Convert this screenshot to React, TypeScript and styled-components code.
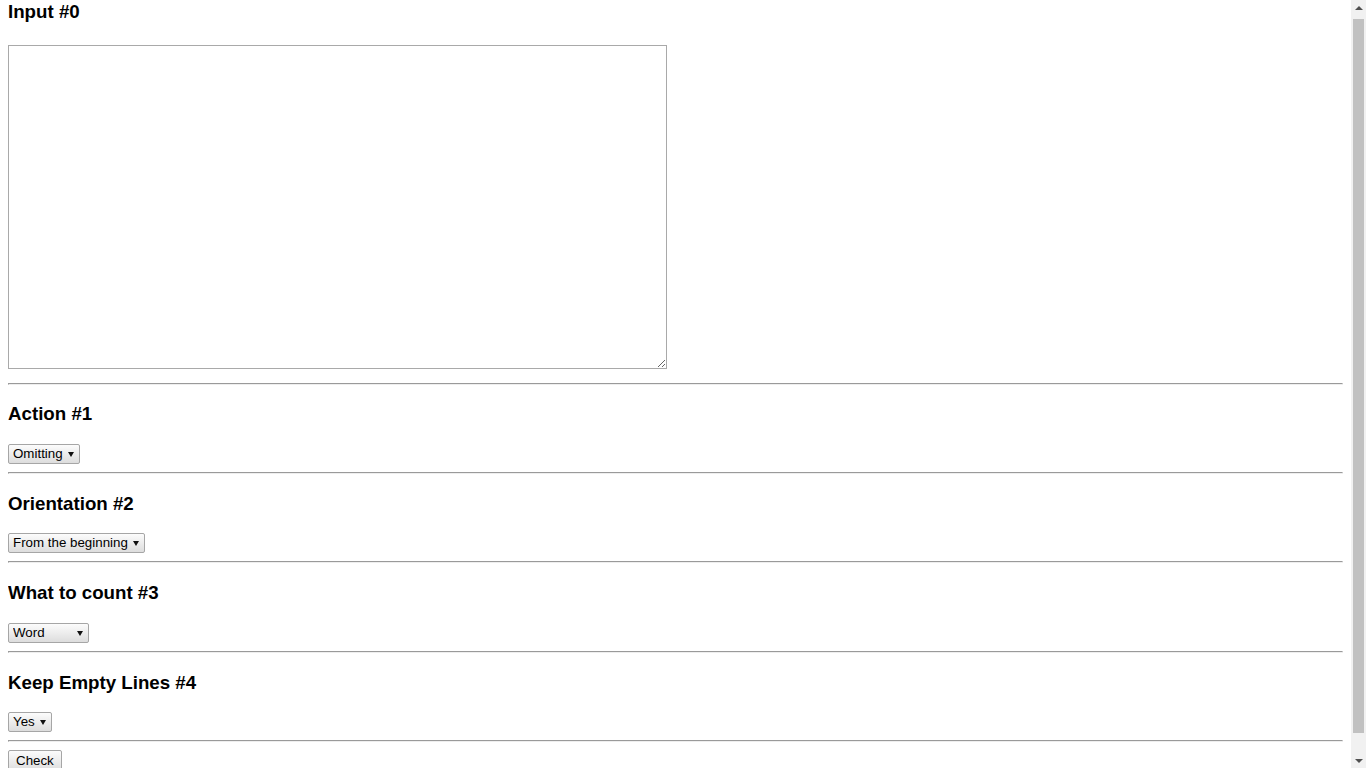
import styled, { createGlobalStyle } from 'styled-components';
import { useState } from 'react';

const GlobalStyle = createGlobalStyle`
  html {
    background: #ffffff;
  }

  body {
    margin: 0 23px 8px 8px;
    font-family: "Liberation Sans", Arial, sans-serif;
    font-size: 16px;
    color: #000000;
  }
`;

const Heading = styled.h3<{ $first?: boolean }>`
  font-size: 1.17em;
  font-weight: bold;
  margin: ${p => (p.$first ? '1px' : '1em')} 0 1em 0;
`;

const Field = styled.div`
  display: block;
`;

const TextArea = styled.textarea`
  display: block;
  box-sizing: border-box;
  width: 659px;
  height: 324px;
  margin: 21.5px 0 14px 0;
  border: 1px solid #a9a9a9;
  padding: 2px;
  font-family: "Liberation Mono", monospace;
  font-size: 13.33px;
`;

const SelectWrap = styled.span`
  position: relative;
  display: inline-block;
`;

const Select = styled.select`
  appearance: none;
  -webkit-appearance: none;
  margin: 0;
  padding: 1px 16px 2px 4px;
  border: 1px solid #a6a6a6;
  border-radius: 2px;
  background: linear-gradient(#fcfcfc, #dddddd);
  color: #000000;
  font-family: "Liberation Sans", Arial, sans-serif;
  font-size: 13.333px;
  line-height: normal;
  outline: none;
`;

const Caret = styled.span`
  position: absolute;
  right: 6px;
  top: 50%;
  margin-top: -2px;
  width: 0;
  height: 0;
  border-left: 3px solid transparent;
  border-right: 3px solid transparent;
  border-top: 5px solid #111111;
  pointer-events: none;
`;

const Divider = styled.hr`
  margin: 8px 0;
`;

const CheckButton = styled.button`
  margin: 0;
  padding: 2px 7px 3px;
  border: 1px solid #a6a6a6;
  border-radius: 2px;
  background: linear-gradient(#fcfcfc, #dddddd);
  color: #000000;
  font-family: "Liberation Sans", Arial, sans-serif;
  font-size: 13.333px;
  line-height: normal;
`;

const Scrollbar = styled.div`
  position: fixed;
  top: 0;
  right: 0;
  width: 15px;
  height: 100vh;
  display: flex;
  flex-direction: column;
  background: #f1f1f1;
`;

const ScrollButton = styled.div`
  height: 15px;
  display: flex;
  align-items: center;
  justify-content: center;
  flex: none;
`;

const ScrollArrow = styled.span<{ $down?: boolean }>`
  width: 0;
  height: 0;
  border-left: 4.5px solid transparent;
  border-right: 4.5px solid transparent;
  ${p => (p.$down ? 'border-top: 4.5px solid #505050;' : 'border-bottom: 4.5px solid #505050;')}
`;

const ScrollThumb = styled.div`
  flex: 1;
  margin: 4px 2px 20px;
  background: #c1c1c1;
`;

interface Option {
  value: string;
  label: string;
}

interface SelectStep {
  title: string;
  key: string;
  options: Option[];
}

const steps: SelectStep[] = [
  {
    title: 'Action #1',
    key: 'action',
    options: [
      { value: 'omit', label: 'Omitting' },
      { value: 'keep', label: 'Keeping' },
    ],
  },
  {
    title: 'Orientation #2',
    key: 'orientation',
    options: [
      { value: 'begin', label: 'From the beginning' },
      { value: 'end', label: 'From the end' },
    ],
  },
  {
    title: 'What to count #3',
    key: 'count',
    options: [
      { value: 'word', label: 'Word' },
      { value: 'character', label: 'Character' },
      { value: 'line', label: 'Line' },
    ],
  },
  {
    title: 'Keep Empty Lines #4',
    key: 'empty',
    options: [
      { value: 'yes', label: 'Yes' },
      { value: 'no', label: 'No' },
    ],
  },
];

export default function App() {
  const [input, setInput] = useState('');
  const [values, setValues] = useState<Record<string, string>>(() =>
    Object.fromEntries(steps.map(s => [s.key, s.options[0].value]))
  );

  return (
    <>
      <GlobalStyle />
      <Heading $first>Input #0</Heading>
      <Field>
        <TextArea value={input} onChange={e => setInput(e.target.value)} />
      </Field>
      <Divider />
      {steps.map(step => (
        <div key={step.key}>
          <Heading>{step.title}</Heading>
          <Field>
            <SelectWrap>
              <Select
                value={values[step.key]}
                onChange={e => setValues(prev => ({ ...prev, [step.key]: e.target.value }))}
              >
                {step.options.map(o => (
                  <option key={o.value} value={o.value}>{o.label}</option>
                ))}
              </Select>
              <Caret />
            </SelectWrap>
          </Field>
          <Divider />
        </div>
      ))}
      <Field>
        <CheckButton type="button">Check</CheckButton>
      </Field>
      <Scrollbar>
        <ScrollButton>
          <ScrollArrow />
        </ScrollButton>
        <ScrollThumb />
        <ScrollButton>
          <ScrollArrow $down />
        </ScrollButton>
      </Scrollbar>
    </>
  );
}
